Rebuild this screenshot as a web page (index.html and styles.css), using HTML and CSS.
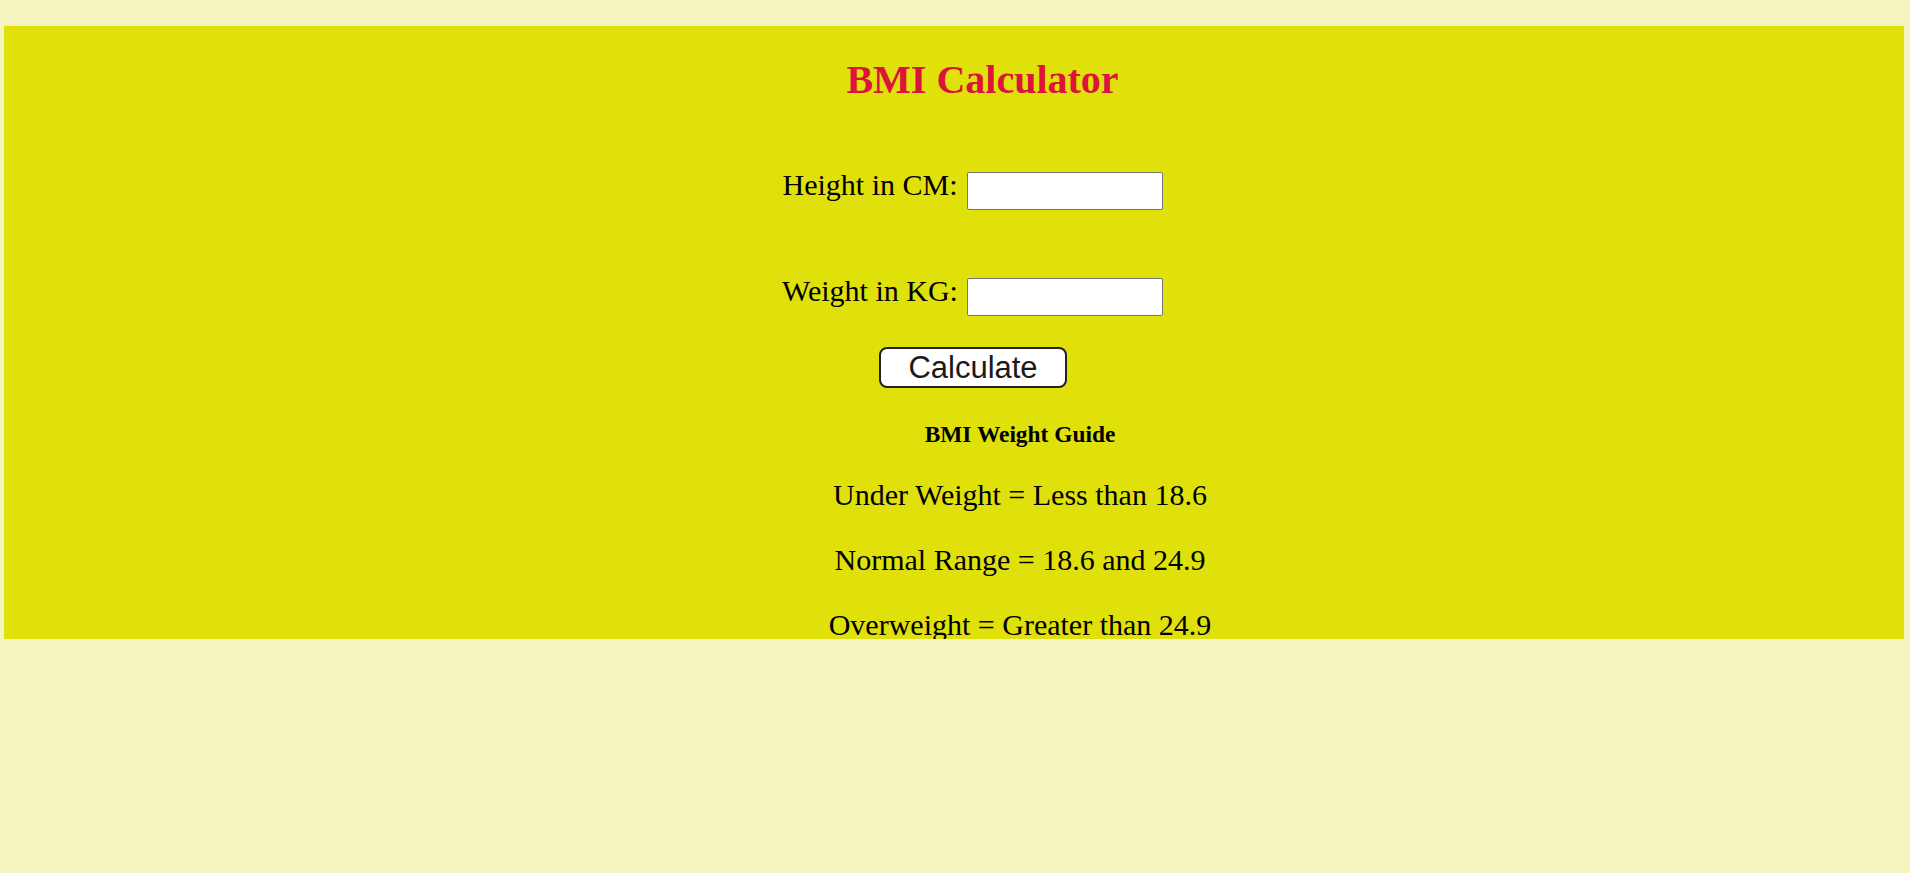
FILE: index.html
```html
<!DOCTYPE html>
<html lang="en">
<head>
<meta charset="utf-8">
<title>BMI Calculator</title>
<link rel="stylesheet" href="styles.css">
</head>
<body>
<div class="card">
  <h1 class="title">BMI Calculator</h1>
  <div class="row row-height">
    <label class="label" for="h">Height in CM:</label>
    <input class="field" id="h" type="text">
  </div>
  <div class="row row-weight">
    <label class="label" for="w">Weight in KG:</label>
    <input class="field" id="w" type="text">
  </div>
  <div class="actions">
    <button class="btn" type="button">Calculate</button>
  </div>
  <div class="guide">
    <h3 class="guide-title">BMI Weight Guide</h3>
    <p class="guide-item">Under Weight = Less than 18.6</p>
    <p class="guide-item">Normal Range = 18.6 and 24.9</p>
    <p class="guide-item">Overweight = Greater than 24.9</p>
  </div>
</div>
</body>
</html>
```

FILE: styles.css
```css
html, body {
  margin: 0;
  padding: 0;
}
body {
  background: #f5f4c0;
  font-family: "Liberation Serif", "Times New Roman", serif;
  color: #000;
  padding: 26px 6px 0 4px;
}
.card {
  background: #e0e00b;
  height: 613px;
  box-sizing: border-box;
  padding-top: 31px;
  text-align: center;
}
.title {
  margin: 0;
  font-size: 40px;
  line-height: 46px;
  font-weight: bold;
  color: #dc143c;
  padding-left: 57px;
}
.row {
  display: flex;
  justify-content: center;
  align-items: flex-start;
  padding-left: 37px;
}
.row-height {
  margin-top: 65px;
}
.row-weight {
  margin-top: 64px;
}
.label {
  font-size: 30px;
  line-height: 34px;
  margin-right: 9px;
}
.field {
  margin-top: 4px;
  width: 196px;
  height: 38px;
  box-sizing: border-box;
  border: 1px solid #767676;
  border-radius: 2px;
  background: #fff;
  padding: 0 4px;
  font-size: 20px;
}
.actions {
  margin-top: 31px;
  padding-left: 38px;
}
.btn {
  width: 188px;
  height: 41px;
  box-sizing: border-box;
  background: #fff;
  border: 2.5px solid #222;
  border-radius: 8px;
  font-family: "Liberation Sans", Arial, sans-serif;
  font-size: 31px;
  line-height: 34px;
  color: #1a1a1a;
  padding: 0;
  margin: 0;
}
.guide {
  padding-left: 132px;
}
.guide-title {
  margin: 33px 0 0;
  font-size: 23.4px;
  line-height: 27px;
  font-weight: bold;
}
.guide-item {
  margin: 30px 0 0;
  font-size: 30px;
  line-height: 35px;
}
.guide-title + .guide-item {
  margin-top: 29px;
}
```
